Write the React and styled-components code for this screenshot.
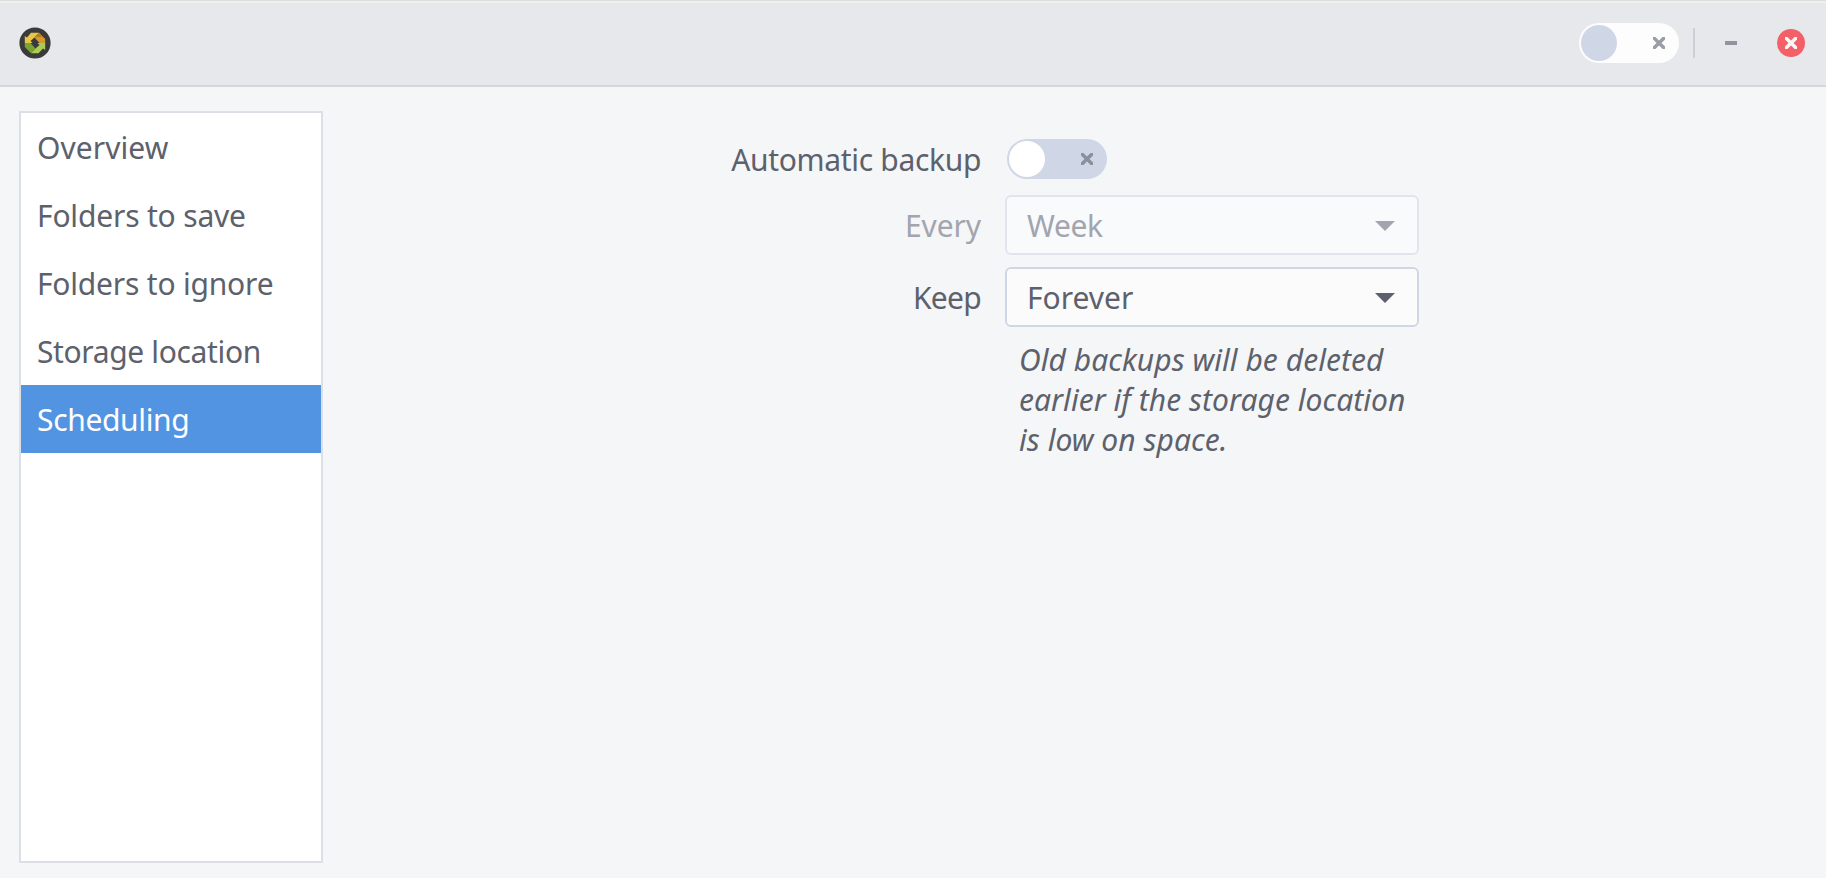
import React from 'react';
import styled, { createGlobalStyle } from 'styled-components';

const GlobalStyle = createGlobalStyle`
  *, *::before, *::after { box-sizing: border-box; }
  body {
    margin: 0;
    background: #f5f6f8;
    color: #5c616c;
    font: 30px/40px "Noto Sans", sans-serif;
  }
`;

const Window = styled.div`
  display: flex;
  flex-direction: column;
  height: 100vh;
  overflow: hidden;
`;

const HeaderBar = styled.header`
  flex: none;
  display: flex;
  align-items: center;
  height: 87px;
  padding: 0 21px 0 19px;
  background: #e7e8ec;
  border-top: 1px solid #dcdddd;
  border-bottom: 2px solid #d5d7df;
  box-shadow: inset 0 2px 0 #eeeff1;
`;

const HeaderControls = styled.div`
  display: flex;
  align-items: center;
  margin-left: auto;
`;

const Separator = styled.span`
  width: 2px;
  height: 30px;
  margin: 0 30px 0 14px;
  background: #cdced7;
`;

const MinimizeButton = styled.button`
  width: 12px;
  height: 4px;
  margin-right: 40px;
  padding: 0;
  border: 0;
  background: #90949e;
`;

const CloseButton = styled.button`
  display: flex;
  align-items: center;
  justify-content: center;
  width: 28px;
  height: 28px;
  padding: 0;
  border: 0;
  border-radius: 50%;
  background: #f46067;
`;

const Body = styled.div`
  flex: 1;
  display: flex;
  padding: 24px 19px 15px;
`;

const Sidebar = styled.nav`
  width: 304px;
  border: 2px solid #dcdfe6;
  background: #fff;
`;

const SidebarItem = styled.div`
  height: 68px;
  padding: 15px 16px 13px;
  background: ${(p) => (p.$selected ? '#5294e2' : 'transparent')};
  color: ${(p) => (p.$selected ? '#fff' : 'inherit')};
  letter-spacing: ${(p) => p.$tracking}px;
`;

const Form = styled.main`
  display: grid;
  grid-template-columns: 658px 414px;
  column-gap: 24px;
  align-content: start;
  align-items: center;
  padding-top: 28px;
`;

const FormRow = styled.div`
  display: grid;
  grid-column: 1 / -1;
  grid-template-columns: subgrid;
  align-items: center;
  margin-bottom: ${(p) => p.$gap}px;
`;

const Label = styled.label`
  padding-top: 2px;
  line-height: 38px;
  text-align: right;
  color: ${(p) => (p.$disabled ? '#a2a5ad' : 'inherit')};
  letter-spacing: ${(p) => p.$tracking}px;
`;

const SwitchTrack = styled.span`
  display: flex;
  align-items: center;
  justify-content: space-between;
  width: 100px;
  height: 40px;
  padding: 0 14px 0 2px;
  border-radius: 20px;
  background: ${(p) => p.$track};
`;

const SwitchKnob = styled.span`
  width: 36px;
  height: 36px;
  border-radius: 50%;
  background: ${(p) => p.$color};
`;

const SwitchCell = styled.div`
  padding-left: 2px;
`;

const Combo = styled.div`
  display: flex;
  align-items: center;
  justify-content: space-between;
  height: 60px;
  padding: 2px 22px 0 20px;
  border: 2px solid ${(p) => (p.$disabled ? '#e0e5ed' : '#cfd6e6')};
  border-radius: 6px;
  background: ${(p) => (p.$disabled ? '#f8fafc' : '#fbfbfc')};
  color: ${(p) => (p.$disabled ? '#a2a5ad' : '#5c616c')};
  letter-spacing: ${(p) => p.$tracking}px;
`;

const Hint = styled.p`
  grid-column: 2;
  margin: 0;
  padding: 1px 0 0 14px;
  font-style: italic;
  letter-spacing: 0.05px;
`;

const Cross = ({ color }) => (
  <svg width="12" height="12" viewBox="0 0 12 12">
    <path d="M1.4 1.4 10.6 10.6M10.6 1.4 1.4 10.6" stroke={color} strokeWidth="3.5" strokeLinecap="square" />
  </svg>
);

const Caret = () => (
  <svg width="20" height="10" viewBox="0 0 20 10">
    <path d="M0 0H20L10 10Z" fill="currentColor" />
  </svg>
);

const AppIcon = () => (
  <svg width="32" height="32" viewBox="0 0 32 32">
    <circle cx="16" cy="16" r="15.6" fill="#3a3a3b" />
    <path d="M12 5.800H20L15.500 10.500L11.500 14L13.500 16H5.800V9L8 10.500Z" fill="#e6c547" />
    <path d="M20 5.800L26.200 12V16H20.500L15.500 10.500Z" fill="#d39b2a" />
    <path d="M20 5.800L24 10H16Z" fill="#b57d20" />
    <path d="M5.800 16H11.500L16.500 21.500L12 26.200L5.800 20Z" fill="#7da338" />
    <path d="M26.200 16V23L24 21.500L19.500 26.200H12L16.500 21.500L20.500 18L18.500 16Z" fill="#a9cc57" />
  </svg>
);

const Switch = ({ track, knob, mark }) => (
  <SwitchTrack $track={track}>
    <SwitchKnob $color={knob} />
    <Cross color={mark} />
  </SwitchTrack>
);

const sections = [
  { name: 'Overview', tracking: 0.05 },
  { name: 'Folders to save', tracking: -0.18 },
  { name: 'Folders to ignore', tracking: -0.2 },
  { name: 'Storage location', tracking: -0.36 },
  { name: 'Scheduling', tracking: -0.34, selected: true },
];

export default function App() {
  return (
    <Window>
      <GlobalStyle />
      <HeaderBar>
        <AppIcon />
        <HeaderControls>
          <Switch track="#fdfdfd" knob="#cfd6e6" mark="#9a9da5" />
          <Separator />
          <MinimizeButton aria-label="Minimize" />
          <CloseButton aria-label="Close"><Cross color="#f8f8f9" /></CloseButton>
        </HeaderControls>
      </HeaderBar>
      <Body>
        <Sidebar>
          {sections.map(({ name, tracking, selected }) => (
            <SidebarItem key={name} $selected={selected} $tracking={tracking}>{name}</SidebarItem>
          ))}
        </Sidebar>
        <Form>
          <FormRow $gap={16}>
            <Label $tracking={-0.33}>Automatic backup</Label>
            <SwitchCell><Switch track="#cfd6e6" knob="#fff" mark="#8b909e" /></SwitchCell>
          </FormRow>
          <FormRow $gap={12}>
            <Label $disabled $tracking={-0.1}>Every</Label>
            <Combo $disabled $tracking={-0.4}>Week<Caret /></Combo>
          </FormRow>
          <FormRow $gap={12}>
            <Label $tracking={-0.7}>Keep</Label>
            <Combo $tracking={0}>Forever<Caret /></Combo>
          </FormRow>
          <Hint>Old backups will be deleted earlier if the storage location is low on space.</Hint>
        </Form>
      </Body>
    </Window>
  );
}
